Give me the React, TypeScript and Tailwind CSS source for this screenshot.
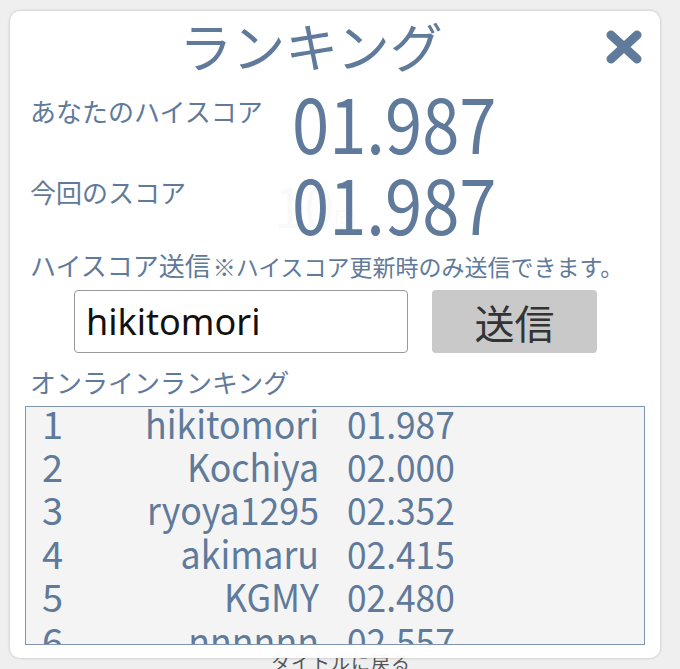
import React from "react";

const ranking = [
  { rank: 1, name: "hikitomori", score: "01.987" },
  { rank: 2, name: "Kochiya", score: "02.000" },
  { rank: 3, name: "ryoya1295", score: "02.352" },
  { rank: 4, name: "akimaru", score: "02.415" },
  { rank: 5, name: "KGMY", score: "02.480" },
  { rank: 6, name: "nnnnnn", score: "02.557" },
  { rank: 7, name: "momo", score: "02.601" },
];

const jp = "font-['Noto_Sans_CJK_JP',sans-serif]";

function CloseIcon() {
  return (
    <svg width="38" height="36" viewBox="0 0 38 36" aria-hidden="true">
      <path d="M6 6 L32 30 M32 6 L6 30" stroke="#5f7a9a" strokeWidth="9" strokeLinecap="round" fill="none" />
    </svg>
  );
}

function ScoreRow({ label, value }: { label: string; value: string }) {
  return (
    <div className="flex h-[81px] items-start">
      <div className="w-[262px] pt-[4px] text-[26px] leading-none">{label}</div>
      <div className="mt-[-12px] inline-block origin-left scale-x-[0.87] text-[77px] leading-none">{value}</div>
    </div>
  );
}

export default function App() {
  return (
    <div className={`relative h-[669px] w-[680px] overflow-hidden bg-[#efefef] ${jp}`}>
      {/* page behind the modal */}
      <div className="flex h-full flex-col items-center text-[#444]">
        <div className="mt-[178px] ml-[-50px] text-[54px] leading-none text-[#888]">
          10<span className="text-[22px]">回</span>
        </div>
        <div className="mt-auto mb-[-7px] ml-[2px] text-[19px] tracking-[1px] text-[#555]">タイトルに戻る</div>
      </div>

      {/* modal */}
      <div className="absolute left-[10px] top-[11px] flex h-[647px] w-[650px] flex-col rounded-[10px] bg-white/95 text-[#5f7a9a] shadow-[0_0_3px_rgba(0,0,0,0.25)]">
        <div className="flex items-start">
          <h1 className="flex-1 pl-[7px] pt-[8px] text-center text-[53px] font-normal leading-none">ランキング</h1>
          <div className="mr-[17px] mt-[18px]">
            <CloseIcon />
          </div>
        </div>

        <div className="mt-[22px] px-[20px]">
          <ScoreRow label="あなたのハイスコア" value="01.987" />
          <ScoreRow label="今回のスコア" value="01.987" />
        </div>

        <div className="mt-[-4px] flex items-end px-[20px]">
          <span className="text-[26px] leading-none">ハイスコア送信</span>
          <span className="ml-[2px] text-[23px] leading-none">※ハイスコア更新時のみ送信できます。</span>
        </div>

        <div className="mt-[12px] flex gap-[24px] pl-[64px]">
          <input
            className="h-[63px] w-[334px] rounded-[4px] border border-[#9a9a9a] bg-white px-[11px] font-['Noto_Sans',sans-serif] text-[36px] text-[#111] outline-none"
            defaultValue="hikitomori"
          />
          <button className="h-[63px] w-[165px] rounded-[4px] bg-[#c9c9c9] text-[40px] text-[#333]">送信</button>
        </div>

        <div className="mt-[16px] px-[20px] text-[26px] leading-none">オンラインランキング</div>

        <div className="mx-[15px] mt-[11px] h-[239px] overflow-hidden border border-[#8096b0] bg-[#f4f4f4]">
          <div className="mt-[-6px]">
            {ranking.map((r) => (
              <div key={r.rank} className="flex h-[43.4px] items-center text-[38px] leading-none">
                <span className="w-[100px] pl-[16px]">{r.rank}</span>
                <span className="inline-block w-[193px] origin-right scale-x-[0.94] text-right">{r.name}</span>
                <span className="inline-block origin-left scale-x-[0.93] pl-[30px]">{r.score}</span>
              </div>
            ))}
          </div>
        </div>
      </div>
    </div>
  );
}
